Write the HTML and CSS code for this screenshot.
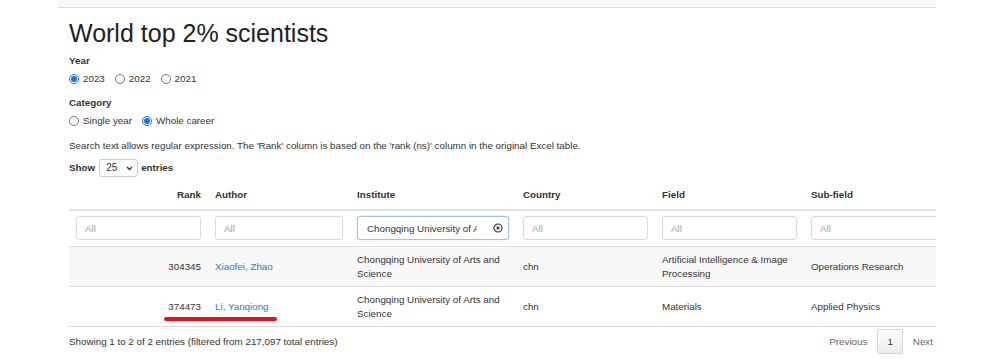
FILE: index.html
```html
<!DOCTYPE html>
<html lang="en">
<head>
    <meta charset="UTF-8">
    <meta name="viewport" content="width=device-width, initial-scale=1.0">
    <title>World top 2% scientists</title>
    <link rel="stylesheet" href="styles.css">
</head>
<body>

<div class="page">
    <div class="topbar"></div>

    <div class="content">
        <h1>World top 2% scientists</h1>

        <div class="group-label">Year</div>
        <div class="radios">
            <label><input type="radio" name="year" value="2023" checked> 2023</label>
            <label><input type="radio" name="year" value="2022"> 2022</label>
            <label><input type="radio" name="year" value="2021"> 2021</label>
        </div>

        <div class="group-label spaced">Category</div>
        <div class="radios">
            <label><input type="radio" name="category" value="single"> Single year</label>
            <label><input type="radio" name="category" value="career" checked> Whole career</label>
        </div>

        <p class="note">Search text allows regular expression. The 'Rank' column is based on the 'rank (ns)' column in the original Excel table.</p>

        <div class="length">
            <b>Show</b>
            <span class="select">
                <select name="length">
                    <option>10</option>
                    <option selected>25</option>
                    <option>50</option>
                    <option>100</option>
                </select>
                <svg width="7" height="5" viewBox="0 0 7 5"><path d="M1 1l2.5 2.5L6 1" fill="none" stroke="#333" stroke-width="1.3"/></svg>
            </span>
            <b>entries</b>
        </div>

        <table class="results">
            <colgroup>
                <col style="width: 139px">
                <col style="width: 142px">
                <col style="width: 166px">
                <col style="width: 139px">
                <col style="width: 149px">
                <col style="width: 150px">
            </colgroup>
            <thead>
                <tr class="heads">
                    <th class="num">Rank</th>
                    <th>Author</th>
                    <th>Institute</th>
                    <th>Country</th>
                    <th>Field</th>
                    <th>Sub-field</th>
                </tr>
                <tr class="filters">
                    <td><input type="text" placeholder="All"></td>
                    <td><input type="text" placeholder="All"></td>
                    <td>
                        <div class="search-box">
                            <input type="text" class="active" value="Chongqing University of Arts and Science">
                            <svg class="clear" width="10" height="10" viewBox="0 0 10 10">
                                <circle cx="5" cy="5" r="4" fill="none" stroke="#333" stroke-width="1.2"/>
                                <path d="M3.6 3.6l2.8 2.8M6.4 3.6l-2.8 2.8" stroke="#333" stroke-width="1.2"/>
                            </svg>
                        </div>
                    </td>
                    <td><input type="text" placeholder="All"></td>
                    <td><input type="text" placeholder="All"></td>
                    <td><input type="text" placeholder="All"></td>
                </tr>
            </thead>
            <tbody>
                <tr class="odd">
                    <td class="num">304345</td>
                    <td><a href="#">Xiaofei, Zhao</a></td>
                    <td>Chongqing University of Arts and Science</td>
                    <td>chn</td>
                    <td>Artificial Intelligence &amp; Image Processing</td>
                    <td>Operations Research</td>
                </tr>
                <tr>
                    <td class="num">374473<span class="mark"></span></td>
                    <td><a href="#">Li, Yanqiong</a></td>
                    <td>Chongqing University of Arts and Science</td>
                    <td>chn</td>
                    <td>Materials</td>
                    <td>Applied Physics</td>
                </tr>
            </tbody>
        </table>

        <div class="footer">
            <div class="info">Showing 1 to 2 of 2 entries (filtered from 217,097 total entries)</div>
            <div class="pager">
                <a href="#" class="disabled">Previous</a>
                <a href="#" class="current">1</a>
                <a href="#" class="disabled">Next</a>
            </div>
        </div>
    </div>
</div>

</body>
</html>
```

FILE: styles.css
```css
body {
    margin: 0;
    background: #fff;
    font-family: "Liberation Sans", Arial, sans-serif;
    font-size: 9.8px;
    line-height: 14px;
    color: #333;
}
.page {
    margin-left: 58px;
    width: 878px;
    height: 361px;
    overflow: hidden;
}
.topbar {
    height: 7px;
    background: #f8f8f8;
    border-bottom: 1px solid #dcdcdc;
}
.content {
    padding-left: 11px;
    width: 885px;
}
h1 {
    margin: 11px 0 0;
    font-size: 25px;
    line-height: 28px;
    font-weight: normal;
    color: #222;
}
.group-label {
    margin-top: 7px;
    font-weight: bold;
}
.group-label.spaced {
    margin-top: 10px;
}
.radios {
    display: flex;
    margin-top: 4px;
    height: 14px;
}
.radios label {
    display: inline-flex;
    align-items: center;
    margin-right: 10px;
}
.radios input {
    width: 10px;
    height: 10px;
    margin: 0 4px 0 0;
    accent-color: #1a73e8;
}
.note {
    margin: 11px 0 0;
}
.length {
    display: flex;
    align-items: center;
    margin-top: 6px;
    height: 18px;
}
.select {
    display: inline-flex;
    align-items: center;
    box-sizing: border-box;
    width: 39px;
    height: 18px;
    margin: 0 3px 0 4px;
    padding-left: 6px;
    border: 1px solid #ccc;
    border-radius: 3px;
}
.select select {
    appearance: none;
    border: none;
    background: none;
    padding: 0;
    width: 18px;
    font: inherit;
    font-size: 10px;
    color: #333;
}
.select svg {
    margin-left: auto;
    margin-right: 4px;
}
.results {
    table-layout: fixed;
    width: 885px;
    margin-top: 3px;
    border-collapse: separate;
    border-spacing: 0;
}
.results th,
.results td {
    padding: 6px 7px 5px;
    text-align: left;
    vertical-align: middle;
}
.results .num {
    text-align: right;
}
.heads th {
    padding: 8px 7px 7px;
    font-weight: bold;
    border-bottom: 2px solid #e2e2e2;
}
.filters td {
    padding: 5px 7px 6px;
}
.filters input {
    box-sizing: border-box;
    width: 100%;
    height: 24px;
    padding: 0 8px;
    border: 1px solid #dadada;
    border-radius: 3px;
    font: inherit;
    color: #333;
    background: #fff;
}
.filters input::placeholder {
    color: #a3a3a3;
}
.search-box {
    position: relative;
}
.filters input.active {
    padding: 0 31px 0 9px;
    border-color: #9cc3e8;
    box-shadow: 0 0 2px rgba(102, 160, 220, 0.4);
}
.search-box .clear {
    position: absolute;
    right: 6px;
    top: 7px;
}
.results tbody td {
    border-top: 1px solid #dedede;
}
.results tbody tr:last-child td {
    border-bottom: 1px solid #dedede;
}
.results tr.odd td {
    background: #f8f8f8;
}
.results a {
    color: #3a77b4;
    text-decoration: none;
}
.results td.num {
    position: relative;
}
.mark {
    position: absolute;
    left: 95px;
    top: 30px;
    width: 113px;
    height: 4px;
    border-radius: 2px;
    background: #e1141c;
}
.footer {
    display: flex;
    justify-content: space-between;
    align-items: center;
    width: 874px;
    padding-top: 2px;
}
.pager {
    display: flex;
}
.pager a {
    padding: 0 9px;
    line-height: 23px;
    border: 1px solid transparent;
    border-radius: 2px;
    color: #666;
    text-decoration: none;
}
.pager a.current {
    color: #333;
    border-color: #d6d6d6;
    background: linear-gradient(#fdfdfd, #ececec);
}
```
